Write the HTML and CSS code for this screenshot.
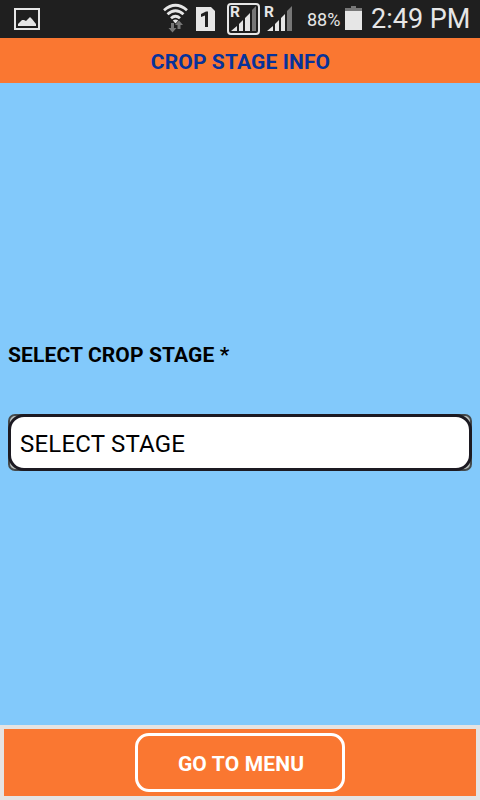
FILE: index.html
```html
<!DOCTYPE html>
<html lang="en">
<head>
<meta charset="utf-8">
<title>Crop Stage Info</title>
<link rel="stylesheet" href="styles.css">
</head>
<body>
<div class="status">
  <svg class="picture" width="26" height="22" viewBox="0 0 26 22"><path fill="none" stroke="#e6e6e6" stroke-width="2" d="M1 1h24v20H1z"/><path fill="#e6e6e6" d="M4 18v-2l4-4h2l2 1 4-4 2 2 4 5v2z"/></svg>
  <svg class="wifi" width="26" height="30" viewBox="0 0 26 30"><g fill="none" stroke="#e6e6e6" stroke-width="2.8"><path d="M1 7.200Q12.500-2.600 24 7.200"/><path d="M4.500 11.200Q12.500 4.200 20.500 11.200"/><path d="M8 15.200Q12.500 11.200 17 15.200"/></g><path fill="#777" d="M8 20h3v5h2.500L9.500 29.500l-4-4.500H8zM14.500 26v-4H12l4-4.500 4 4.500h-2.500v4z"/><path fill="#e6e6e6" d="M9.800 17.500Q12.500 15.300 15.200 17.500L12.500 20.500z"/></svg>
  <svg class="sim" width="19" height="24" viewBox="0 0 19 24"><path fill="#e6e6e6" d="M0 0h15l4 4v20H0z"/><path fill="#1f1f1f" d="M10 4.500h2V20H9V8.500L5 10V7z"/></svg>
  <div class="signal boxed">
    <span class="roaming">R</span>
    <svg width="26" height="26" viewBox="0 0 26 26"><path fill="#e6e6e6" d="M0 26l6-5v5zM8 26v-7l4-4v11zM14 26V13l5-5v18z"/><path fill="#777" d="M21 26V5l4-4v25z"/></svg>
  </div>
  <div class="signal">
    <span class="roaming">R</span>
    <svg width="26" height="26" viewBox="0 0 26 26"><path fill="#e6e6e6" d="M0 26l6-5v5zM8 26v-7l4-4v11zM14 26V13l4-4v17z"/><path fill="#777" d="M20 26V6l5-5v25z"/></svg>
  </div>
  <span class="percent">88%</span>
  <svg class="battery" width="17" height="24" viewBox="0 0 17 24"><path fill="#777" d="M0 2h6V0h5v2h6v3H0z"/><path fill="#e6e6e6" d="M0 5h17v19H0z"/></svg>
  <span class="clock">2:49 PM</span>
</div>
<header class="header"><h1 class="title">CROP STAGE INFO</h1></header>
<main class="content">
  <label class="label">SELECT CROP STAGE *</label>
  <div class="select"><div class="field"><span class="value">SELECT STAGE</span></div></div>
</main>
<footer class="footer"><button class="menu-button"><span class="menu-text">GO TO MENU</span></button></footer>
</body>
</html>
```
FILE: styles.css
```css
* { box-sizing: border-box; }
body {
  margin: 0;
  width: 480px;
  height: 800px;
  display: flex;
  flex-direction: column;
  overflow: hidden;
  background: #82c9fb;
  font-family: Roboto, sans-serif;
}
.status {
  height: 38px;
  flex: none;
  display: flex;
  align-items: flex-start;
  background: #1f1f1f;
  color: #e6e6e6;
  white-space: nowrap;
}
svg { display: block; flex: none; }
.picture { margin: 8px 0 0 14px; }
.wifi { margin: 3px 0 0 123px; }
.sim { margin: 7px 0 0 7px; }
.signal {
  position: relative;
  flex: none;
  width: 28px;
  height: 26px;
  margin: 5px 0 0 4px;
  padding-left: 3px;
}
.boxed {
  width: 33px;
  height: 32px;
  margin: 3px 0 0 12px;
  padding: 0 0 0 2px;
  border: 2px solid #e6e6e6;
  border-radius: 4px;
}
.roaming {
  position: absolute;
  left: 0;
  top: 0;
  font-size: 15.5px;
  line-height: 15px;
  font-weight: 700;
}
.boxed .roaming { left: 1px; top: 0; }
.percent { width: 34px; margin-left: 15px; font-size: 18px; line-height: 39px; }
.battery { margin: 6px 0 0 4px; }
.clock { margin-left: 9px; font-size: 27px; line-height: 38px; }
.header {
  height: 45px;
  flex: none;
  display: flex;
  align-items: center;
  justify-content: center;
  padding-top: 3px;
  background: #fa7731;
}
.title {
  margin: 0;
  padding-left: 1px;
  font-size: 21px;
  line-height: 26px;
  font-weight: 700;
  letter-spacing: 0.12px;
  color: #07329a;
}
.content {
  flex: 1;
  display: flex;
  flex-direction: column;
  justify-content: center;
  padding: 5px 8px 0;
}
.label { font-size: 21px; line-height: 26px; font-weight: 700; letter-spacing: 0.12px; color: #000; }
.select {
  height: 57px;
  margin-top: 46px;
  border: 2px solid #44494b;
  border-radius: 7px;
  background: #b9bdba;
}
.field {
  height: 57px;
  margin: -2px;
  display: flex;
  align-items: center;
  padding-left: 9px;
  border: 3px solid #1c1a22;
  border-radius: 16px;
  background: #fff;
}
.value { font-size: 24px; line-height: 30px; letter-spacing: 0.2px; color: #000; padding-top: 2px; }
.footer {
  height: 75px;
  flex: none;
  display: flex;
  justify-content: center;
  align-items: flex-start;
  padding-top: 4px;
  border: 4px solid #e5e3e2;
  background: #fa7731;
}
.menu-button {
  width: 210px;
  height: 59px;
  padding: 2px 0 0 2px;
  border: 3px solid #fff;
  border-radius: 14px;
  background: transparent;
  color: #fff;
  font: 700 21px/26px Roboto, sans-serif;
  letter-spacing: 0.15px;
}
```
